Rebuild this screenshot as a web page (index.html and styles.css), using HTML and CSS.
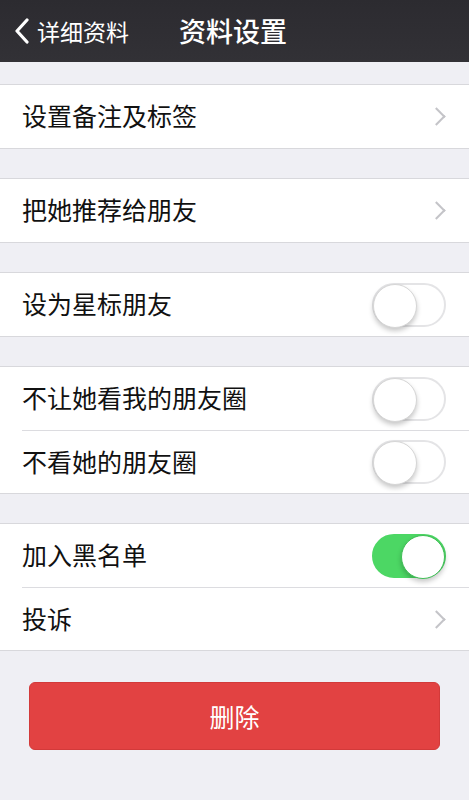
FILE: index.html
```html
<!DOCTYPE html>
<html lang="zh">
<head>
  <meta charset="UTF-8" />
  <meta name="viewport" content="width=device-width, initial-scale=1.0" />
  <title>资料设置</title>
  <link rel="stylesheet" href="styles.css">
</head>
<body>

  <header class="barra">
    <div class="atras">
      <svg class="flecha" width="16" height="26" viewBox="0 0 16 26">
        <path d="M13 2 L3 13 L13 24" fill="none" stroke="#fff" stroke-width="3.2" stroke-linecap="round" stroke-linejoin="round"/>
      </svg>
      <span>详细资料</span>
    </div>
    <h1 class="titulo">资料设置</h1>
  </header>

  <main class="contenido">
    <section class="grupo">
      <div class="fila">
        <span class="texto">设置备注及标签</span>
        <span class="chevron"></span>
      </div>
    </section>

    <section class="grupo">
      <div class="fila">
        <span class="texto">把她推荐给朋友</span>
        <span class="chevron"></span>
      </div>
    </section>

    <section class="grupo">
      <div class="fila">
        <span class="texto">设为星标朋友</span>
        <span class="interruptor"></span>
      </div>
    </section>

    <section class="grupo">
      <div class="fila">
        <span class="texto">不让她看我的朋友圈</span>
        <span class="interruptor"></span>
      </div>
      <div class="fila">
        <span class="texto">不看她的朋友圈</span>
        <span class="interruptor"></span>
      </div>
    </section>

    <section class="grupo">
      <div class="fila">
        <span class="texto">加入黑名单</span>
        <span class="interruptor activo"></span>
      </div>
      <div class="fila">
        <span class="texto">投诉</span>
        <span class="chevron"></span>
      </div>
    </section>

    <button class="borrar">删除</button>
  </main>

</body>
</html>
```

FILE: styles.css
```css
* { box-sizing: border-box; }
body {
  margin: 0;
  font-family: "Noto Sans CJK SC", "Noto Sans", sans-serif;
  background-color: #efeff4;
  width: 469px;
  height: 800px;
  overflow: hidden;
}

.barra {
  height: 62px;
  background: linear-gradient(#2c2b30, #323136);
  display: flex;
  align-items: center;
  position: relative;
  color: #fff;
}
.atras {
  display: flex;
  align-items: center;
  padding-left: 14px;
  font-size: 23px;
  gap: 7px;
  line-height: 1;
}
.flecha { margin-top: -1px; }
.titulo {
  position: absolute;
  left: 179px;
  top: 0;
  margin: 0;
  line-height: 61px;
  font-size: 27px;
  font-weight: 500;
}

.contenido { padding-top: 22px; }

.grupo {
  background: #fff;
  border-top: 1px solid #d8d8dc;
  border-bottom: 1px solid #d8d8dc;
  margin-bottom: 29px;
}
.fila {
  height: 63px;
  display: flex;
  align-items: center;
  justify-content: space-between;
  padding: 0 22px 0 22px;
  position: relative;
}
.fila + .fila { border-top: 1px solid #dcdce0; margin-left: 22px; padding-left: 0; }
.texto {
  font-size: 25px;
  color: #111;
  line-height: 1;
  margin-top: -2px;
}

.chevron {
  width: 13px;
  height: 13px;
  border-top: 2px solid #c4c4c8;
  border-right: 2px solid #c4c4c8;
  transform: rotate(45deg);
  margin-right: 4px;
}

.interruptor {
  width: 74px;
  height: 44px;
  border-radius: 22px;
  border: 2px solid #e4e4e6;
  background: #fff;
  position: relative;
  margin-right: 1px;
}
.interruptor::after {
  content: "";
  position: absolute;
  left: -1px;
  top: -1px;
  width: 42px;
  height: 42px;
  border-radius: 50%;
  background: #fff;
  border: 1px solid #d6d6d6;
  box-shadow: 0 3px 5px rgba(0, 0, 0, 0.22);
}
.interruptor.activo {
  background: #4cd764;
  border-color: #4cd764;
}
.interruptor.activo::after {
  left: auto;
  right: -1px;
  border-color: #3fbf55;
}

.borrar {
  display: block;
  margin: 31px auto 0;
  width: 411px;
  height: 68px;
  background: #e24242;
  color: #fff;
  border: 1px solid #d23a3a;
  border-radius: 6px;
  font-family: "Noto Sans CJK SC", sans-serif;
  font-size: 25px;
}
```
